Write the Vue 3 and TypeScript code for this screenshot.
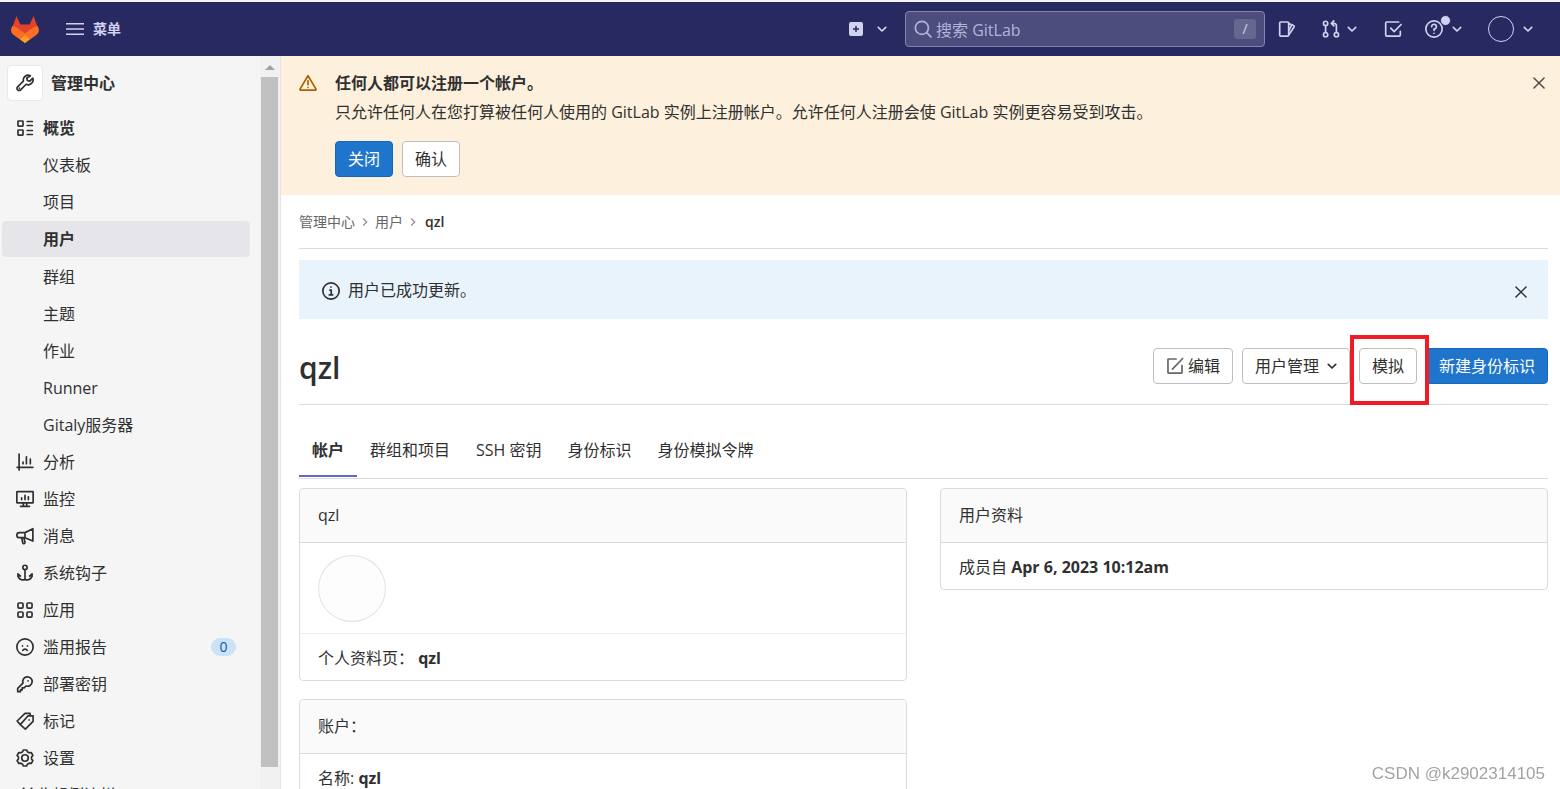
<script setup lang="ts">
import { ref } from 'vue'

interface NavItem {
  label: string
  icon: string
  badge?: number
}

const subItems: string[] = ['仪表板', '项目', '用户', '群组', '主题', '作业', 'Runner', 'Gitaly服务器']
const activeSub = ref('用户')

const navItems: NavItem[] = [
  { label: '分析', icon: 'chart' },
  { label: '监控', icon: 'monitor' },
  { label: '消息', icon: 'megaphone' },
  { label: '系统钩子', icon: 'anchor' },
  { label: '应用', icon: 'apps' },
  { label: '滥用报告', icon: 'frown', badge: 0 },
  { label: '部署密钥', icon: 'key' },
  { label: '标记', icon: 'labels' },
  { label: '设置', icon: 'gear' },
]

const tabs: string[] = ['帐户', '群组和项目', 'SSH 密钥', '身份标识', '身份模拟令牌']
const activeTab = ref('帐户')
const query = ref('')
</script>

<template>
  <svg class="sprite" aria-hidden="true">
    <symbol id="chevron-down" viewBox="0 0 16 16"><path d="M4.7 6.5 8 9.8l3.3-3.3" /></symbol>
    <symbol id="chevron-right" viewBox="0 0 16 16"><path d="M6 4 10 8 6 12" /></symbol>
    <symbol id="collapse" viewBox="0 0 16 16"><path d="M7 2 1.5 8 7 14M14 2 8.500 8l5.500 6" /></symbol>
    <symbol id="close" viewBox="0 0 16 16"><path d="m3.500 3.500 9 9m0-9-9 9" /></symbol>
    <symbol id="search" viewBox="0 0 16 16"><circle cx="7" cy="7" r="5.800" /><path d="m11.500 11.500 3.500 3.500" /></symbol>
    <symbol id="wrench" viewBox="0 0 16 16"><path d="M12.800 1.600A4.300 4.300 0 0 0 6.600 6.400L1.400 11.400a1.900 1.900 0 0 0 0 2.700 1.900 1.900 0 0 0 2.700 0l4.900-5a4.300 4.300 0 0 0 5.900-5.400l-2.600 2.600-2.200-.5-.5-2.200z" /><path d="M3 12.600h.01" /></symbol>
    <symbol id="overview" viewBox="0 0 16 16"><rect x="1.750" y="1.750" width="4.500" height="4.500" rx=".5" /><rect x="1.750" y="9.750" width="4.500" height="4.500" rx=".5" /><path d="M10 2.200h4.500M10 5.800h4.500M10 10.200h4.500M10 13.800h4.500" /></symbol>
    <symbol id="chart" viewBox="0 0 16 16"><path d="M2.750 1v14M1 12.750h14M6.250 8v1.500M9.250 3.500v6M12.750 5.500v4" /></symbol>
    <symbol id="monitor" viewBox="0 0 16 16"><rect x=".75" y="1.500" width="14.500" height="10" rx=".5" /><path d="M6.500 11.500v3m3-3v3M4 14.500h8M5 7v1.500M8 4.800v3.700M11 6v2.500" /></symbol>
    <symbol id="megaphone" viewBox="0 0 16 16"><path d="M15 1.500v11L8 9.500H3A2.250 2.250 0 0 1 3 5h5zM8 5v4.500M5 9.800l1 4.200a1 1 0 0 0 2-.5L7 9.800" /></symbol>
    <symbol id="anchor" viewBox="0 0 16 16"><circle cx="8" cy="3" r="1.900" /><path d="M8 5v9M1.700 11V8.700L4 10.700M1.700 9c0 5.500 5 5.500 6.300 4.800 1.300.7 6.300.7 6.300-4.800M14.300 11V8.700L12 10.700" /></symbol>
    <symbol id="apps" viewBox="0 0 16 16"><rect x="1.750" y="1.750" width="4.500" height="4.500" rx="1" /><rect x="9.750" y="1.750" width="4.500" height="4.500" rx="1" /><rect x="1.750" y="9.750" width="4.500" height="4.500" rx="1" /><rect x="9.750" y="9.750" width="4.500" height="4.500" rx="1" /></symbol>
    <symbol id="frown" viewBox="0 0 16 16"><circle cx="8" cy="8" r="7.250" /><path d="M5.800 7h.01M10.200 7h.01M6 11c.8-1.500 3.200-1.500 4 0" /></symbol>
    <symbol id="key" viewBox="0 0 16 16"><path d="M6.200 7.200a4.200 4.200 0 1 1 2.700 2.600L7.200 11.500H5.500v1.700H4v1.600H1.500v-2.900z" /><path d="M10.700 5.200h.01" /></symbol>
    <symbol id="labels" viewBox="0 0 16 16"><path d="m3.800 11.200 4.500 4 6.900-6.900V3.500h-4.600L3.800 11.200 1 8l7-6.700h4.500v2" /><path d="M11.700 7h.01" /></symbol>
    <symbol id="gear" viewBox="0 0 16 16"><circle cx="8" cy="8" r="2.900" /><path d="M6.500 .9h3l.6 1.600 1.600.9 1.800-.3 1.500 2.600-1.200 1.400v1.800l1.200 1.400-1.500 2.600-1.800-.3-1.600.9-.6 1.600h-3l-.6-1.600-1.600-.9-1.800.3L1 10.300l1.200-1.400V7.100L1 5.700l1.500-2.600 1.800.3 1.600-.9z" /></symbol>
    <symbol id="issues" viewBox="0 0 16 16"><rect x="1.500" y="1.750" width="8" height="12.500" rx="1" /><path d="M9.500 3.200l4.300 1.700a1 1 0 0 1 .5 1.300L9.800 12.800M9.800 9l2.400-4.500" /></symbol>
    <symbol id="merge" viewBox="0 0 16 16"><circle cx="3.200" cy="3" r="1.900" /><circle cx="3.200" cy="13" r="1.900" /><circle cx="12.800" cy="13" r="1.900" /><path d="M3.200 5v6M12.800 11V5.500A2.200 2.200 0 0 0 10.500 3H8.500M10.500.8 8.300 3l2.200 2.200" /></symbol>
    <symbol id="todo" viewBox="0 0 16 16"><path d="M13 1.750H2.500a1 1 0 0 0-1 1v10.500a1 1 0 0 0 1 1h11a1 1 0 0 0 1-1V10M6 7.300l3 3L15.200 4" /></symbol>
    <symbol id="help" viewBox="0 0 16 16"><circle cx="8" cy="8" r="7.250" /><path d="M5.900 6A2.100 2.100 0 1 1 8 8v1.200M8 11.800h.01" /></symbol>
    <symbol id="warning" viewBox="0 0 16 16"><path d="M8 1.600 1 13.200a.8.8 0 0 0 .7 1.200h12.600a.8.8 0 0 0 .7-1.200zM8 6v3.500M8 12h.01" /></symbol>
    <symbol id="info" viewBox="0 0 16 16"><circle cx="8" cy="8" r="7.250" /><path d="M7 7.200h1.200v4M6.500 11.500h3M8 4.500h.01" /></symbol>
    <symbol id="edit" viewBox="0 0 16 16"><path d="M9 1.750H2.250a.5.500 0 0 0-.5.500v11.500a.5.500 0 0 0 .5.500h11.500a.5.500 0 0 0 .5-.5V7.500M7 9.500 14.800 1.300M5.800 10.800 7 9.500" /></symbol>
  </svg>

  <div class="app">
    <header class="navbar">
      <a class="logo" href="#" aria-label="GitLab">
        <svg viewBox="0 0 28 27" aria-hidden="true">
          <path fill="#e24329" d="M5.500 0 1 12l13 15 13-15L22.500 0l-3.800 8.500H9.300z" />
          <path fill="#fc6d26" d="M1.300 10 0 13.500c0 3 1.300 4.500 3 5.700L14 27l11-7.800c1.700-1.200 3-2.700 3-5.700L26.700 10c-3 .5-5 1.700-7 3.200L14 17.500l-5.700-4.300C6.300 11.700 4.300 10.500 1.300 10z" />
          <path fill="#fca326" d="m14 19.200-4.800 4L14 27l4.800-3.800z" />
        </svg>
      </a>
      <button class="menu-btn" type="button">
        <svg class="burger" viewBox="0 0 18 12" aria-hidden="true"><path d="M0 .75h18M0 6h18M0 11.250h18" /></svg>
        菜单
      </button>
      <nav class="nav-right" aria-label="工具栏">
        <button class="nav-btn new" type="button" aria-label="新建">
          <svg class="plus" viewBox="0 0 14 14" aria-hidden="true"><rect width="14" height="14" rx="2" fill="#d1d1f0" /><path d="M7 4v6M4 7h6" stroke="#292961" stroke-width="1.500" /></svg>
          <svg class="icon"><use href="#chevron-down" /></svg>
        </button>
        <label class="search">
          <svg class="icon"><use href="#search" /></svg>
          <input v-model="query" type="text" placeholder="搜索 GitLab" aria-label="搜索 GitLab" />
          <kbd>/</kbd>
        </label>
        <a class="nav-btn issues" href="#" aria-label="议题"><svg class="icon"><use href="#issues" /></svg></a>
        <button class="nav-btn merge" type="button" aria-label="合并请求">
          <svg class="icon"><use href="#merge" /></svg><svg class="icon"><use href="#chevron-down" /></svg>
        </button>
        <a class="nav-btn todo" href="#" aria-label="待办事项"><svg class="icon"><use href="#todo" /></svg></a>
        <button class="nav-btn help" type="button" aria-label="帮助">
          <svg class="icon"><use href="#help" /></svg><span class="dot"></span><svg class="icon"><use href="#chevron-down" /></svg>
        </button>
        <button class="nav-btn user" type="button" aria-label="用户菜单">
          <span class="avatar-sm"></span><svg class="icon"><use href="#chevron-down" /></svg>
        </button>
      </nav>
    </header>

    <div class="body">
      <aside class="sidebar">
        <nav class="side-nav" aria-label="管理中心">
          <a class="context" href="#">
            <span class="context-icon"><svg class="icon"><use href="#wrench" /></svg></span>
            管理中心
          </a>
          <ul>
            <li>
              <a class="row strong" href="#"><svg class="icon"><use href="#overview" /></svg>概览</a>
              <ul class="sub">
                <li v-for="s in subItems" :key="s">
                  <a class="row child" :class="{ active: s === activeSub }" href="#" @click.prevent="activeSub = s">{{ s }}</a>
                </li>
              </ul>
            </li>
            <li v-for="n in navItems" :key="n.label">
              <a class="row" href="#">
                <svg class="icon"><use :href="'#' + n.icon" /></svg>{{ n.label }}
                <span v-if="n.badge !== undefined" class="badge">{{ n.badge }}</span>
              </a>
            </li>
          </ul>
          <button class="collapse" type="button"><svg class="icon"><use href="#collapse" /></svg>收起侧边栏</button>
        </nav>
        <div class="scrollbar" aria-hidden="true"><span class="arrow"></span><span class="thumb"></span></div>
      </aside>

      <main class="main">
        <section class="banner">
          <svg class="icon warn"><use href="#warning" /></svg>
          <div class="banner-body">
            <h2>任何人都可以注册一个帐户。</h2>
            <p>只允许任何人在您打算被任何人使用的 GitLab 实例上注册帐户。允许任何人注册会使 GitLab 实例更容易受到攻击。</p>
            <div class="actions">
              <button class="btn primary" type="button">关闭</button>
              <button class="btn" type="button">确认</button>
            </div>
          </div>
          <button class="close" type="button" aria-label="关闭提示"><svg class="icon"><use href="#close" /></svg></button>
        </section>

        <div class="content">
          <nav class="crumbs" aria-label="面包屑">
            <a href="#">管理中心</a>
            <svg class="sep"><use href="#chevron-right" /></svg>
            <a href="#">用户</a>
            <svg class="sep"><use href="#chevron-right" /></svg>
            <a class="current" href="#">qzl</a>
          </nav>

          <div class="alert" role="status">
            <svg class="icon"><use href="#info" /></svg>
            <span>用户已成功更新。</span>
            <button class="close" type="button" aria-label="关闭消息"><svg class="icon"><use href="#close" /></svg></button>
          </div>

          <div class="title-row">
            <h1>qzl</h1>
            <div class="actions">
              <a class="btn edit" href="#"><svg class="icon"><use href="#edit" /></svg>编辑</a>
              <button class="btn dropdown" type="button">用户管理<svg class="icon"><use href="#chevron-down" /></svg></button>
              <span class="marked"><a class="btn" href="#">模拟</a></span>
              <a class="btn primary wide" href="#">新建身份标识</a>
            </div>
          </div>

          <div class="tabs" role="tablist">
            <button
              v-for="t in tabs"
              :key="t"
              type="button"
              role="tab"
              :aria-selected="t === activeTab"
              :class="{ active: t === activeTab }"
              @click="activeTab = t"
            >{{ t }}</button>
          </div>

          <div class="columns">
            <div class="column">
              <section class="card">
                <h3>qzl</h3>
                <div class="avatar-row"><span class="avatar"></span></div>
                <p class="line">个人资料页： <a href="#">qzl</a></p>
              </section>
              <section class="card">
                <h3>账户：</h3>
                <p class="line">名称: <b>qzl</b></p>
              </section>
            </div>
            <div class="column">
              <section class="card">
                <h3>用户资料</h3>
                <p class="line">成员自 <b>Apr 6, 2023 10:12am</b></p>
              </section>
            </div>
          </div>
        </div>
      </main>
    </div>
    <div class="watermark">CSDN @k2902314105</div>
  </div>
</template>

<style>
body {
  margin: 0;
}
</style>

<style scoped>
* {
  box-sizing: border-box;
}
.sprite {
  position: absolute;
  width: 0;
  height: 0;
}
.app {
  display: flex;
  flex-direction: column;
  height: 100vh;
  overflow: hidden;
  border-top: 2px solid #f4f4f6;
  background: #fff;
  color: #303030;
  font: 16px/24px "Open Sans", "Noto Sans CJK SC", sans-serif;
}
button,
input {
  font: inherit;
  color: inherit;
}
button {
  border: 0;
  padding: 0;
  background: none;
  cursor: pointer;
}
a {
  color: inherit;
  text-decoration: none;
}
h1,
h2,
h3,
p,
ul {
  margin: 0;
  padding: 0;
  list-style: none;
}
.icon {
  flex: none;
  width: 18px;
  height: 18px;
  fill: none;
  stroke: currentColor;
  stroke-width: 1.5;
  stroke-linecap: round;
  stroke-linejoin: round;
}

/* top bar */
.navbar {
  flex: none;
  display: flex;
  align-items: center;
  height: 54px;
  padding: 0 23px 0 11px;
  background: #292961;
  color: #d1d1f0;
}
.logo {
  width: 28px;
  height: 27px;
}
.logo svg {
  display: block;
  width: 28px;
  height: 27px;
}
.menu-btn {
  display: flex;
  align-items: center;
  gap: 9px;
  margin-left: 27px;
  font-size: 14px;
  font-weight: 700;
}
.burger {
  width: 18px;
  height: 12px;
  stroke: #d1d1f0;
  stroke-width: 1.5;
}
.nav-right {
  display: flex;
  align-items: center;
  margin-left: auto;
}
.nav-btn {
  position: relative;
  display: flex;
  align-items: center;
}
.plus {
  width: 14px;
  height: 14px;
}
.new {
  gap: 10px;
  margin-right: 14px;
}
.search {
  display: flex;
  align-items: center;
  width: 360px;
  height: 36px;
  padding: 0 8px;
  border: 1px solid #8484b0;
  border-radius: 4px;
  background: #4c4c7d;
  color: #b4b4da;
}
.search input {
  flex: 1;
  min-width: 0;
  margin-left: 4px;
  padding: 2px 0 0;
  border: 0;
  outline: 0;
  background: none;
}
.search input::placeholder {
  color: #b4b4da;
  opacity: 1;
}
.search kbd {
  width: 22px;
  border-radius: 3px;
  background: #66668f;
  color: #d1d1f0;
  font: 14px/20px "Open Sans", sans-serif;
  text-align: center;
}
.issues {
  margin-left: 13px;
}
.merge {
  gap: 3px;
  margin-left: 26px;
}
.todo {
  margin-left: 23px;
}
.help {
  gap: 5px;
  margin-left: 23px;
}
.dot {
  position: absolute;
  left: 15px;
  top: -5px;
  width: 11px;
  height: 11px;
  border: 1px solid #292961;
  border-radius: 50%;
  background: #d1d1f0;
}
.user {
  gap: 5px;
  margin-left: 22px;
}
.avatar-sm {
  width: 26px;
  height: 26px;
  border: 1px solid #d1d1f0;
  border-radius: 50%;
}

/* sidebar */
.body {
  flex: 1;
  display: flex;
  min-height: 0;
}
.sidebar {
  flex: none;
  display: flex;
  width: 281px;
  border-right: 1px solid #e5e5e8;
  background: #f5f5f5;
}
.side-nav {
  flex: 1;
  overflow: hidden;
  padding: 9px 10px 0 2px;
}
.context {
  display: flex;
  align-items: center;
  gap: 8px;
  height: 36px;
  margin: 0 0 9px 5px;
  font-weight: 600;
}
.context-icon {
  display: flex;
  align-items: center;
  justify-content: center;
  width: 36px;
  height: 36px;
  border: 1px solid #e8e8e8;
  border-radius: 4px;
  background: #fff;
}
.row {
  display: flex;
  align-items: center;
  gap: 9px;
  height: 36px;
  margin-bottom: 1px;
  padding: 0 14px;
  border-radius: 4px;
}
.child {
  padding-left: 41px;
}
.strong,
.active {
  font-weight: 600;
}
.row.active {
  margin-bottom: 2px;
  background: #e6e6ea;
}
.badge {
  min-width: 25px;
  margin-left: auto;
  border-radius: 9px;
  background: #cbe2f9;
  color: #0b5cad;
  font-size: 14px;
  line-height: 18px;
  text-align: center;
}
.collapse {
  display: flex;
  align-items: center;
  gap: 2px;
  height: 36px;
  padding-left: 14px;
}
.scrollbar {
  flex: none;
  display: flex;
  flex-direction: column;
  align-items: center;
  width: 20px;
  padding: 0 2px 0 1px;
  background: #f1f1f1;
}
.arrow {
  margin: 9px 0 7px;
  border: solid transparent;
  border-width: 0 5px 5px;
  border-bottom-color: #a3a3a3;
}
.thumb {
  flex: 1;
  width: 17px;
  margin-bottom: 22px;
  background: #c1c1c1;
}

/* banner */
.main {
  flex: 1;
  min-width: 0;
  overflow: hidden;
}
.banner {
  display: flex;
  align-items: flex-start;
  padding: 15px 12px 18px 18px;
  background: #fdf1dd;
}
.warn {
  margin-top: 3px;
  color: #ab6100;
}
.banner-body {
  flex: 1;
  margin-left: 18px;
}
.banner h2 {
  margin-bottom: 5px;
  font-size: 16px;
  line-height: 24px;
  font-weight: 600;
}
.banner .actions {
  margin-top: 17px;
}
.close {
  display: flex;
  margin-top: 3px;
}
.close .icon {
  stroke-width: 1.3;
}
.banner .close {
  color: #4f4a42;
}
.actions {
  display: flex;
  gap: 9px;
}
.btn {
  display: inline-flex;
  align-items: center;
  height: 36px;
  padding: 0 12px;
  border: 1px solid #bfbfbf;
  border-radius: 4px;
  background: #fff;
}
.btn.primary {
  border-color: #1068bf;
  background: #1f75cb;
  color: #fff;
}

/* content */
.content {
  padding: 0 12px 0 18px;
}
.crumbs {
  display: flex;
  align-items: center;
  height: 54px;
  border-bottom: 1px solid #dcdcdc;
  color: #666;
  font-size: 14px;
}
.sep {
  width: 14px;
  height: 14px;
  margin: 0 3px;
  fill: none;
  stroke: #888;
  stroke-width: 1.3;
}
.current {
  margin-left: 2px;
  color: #303030;
  font-weight: 600;
}
.alert {
  display: flex;
  align-items: center;
  gap: 8px;
  height: 59px;
  margin-top: 11px;
  padding: 0 18px 0 23px;
  background: #e9f3fc;
}
.alert > .icon {
  margin-top: 3px;
}
.alert .close {
  margin: 4px 0 0 auto;
}
.title-row {
  display: flex;
  align-items: center;
  justify-content: space-between;
  padding: 29px 0 20px;
  border-bottom: 1px solid #dcdcdc;
}
h1 {
  padding-top: 4px;
  font-size: 30px;
  line-height: 32px;
  font-weight: 600;
}
.btn.edit {
  gap: 4px;
}
.btn.edit .icon {
  color: #666;
}
.btn.dropdown {
  gap: 4px;
  padding-right: 8px;
}
.marked {
  position: relative;
}
.marked::after {
  content: "";
  position: absolute;
  inset: -13px -12px -21px -9px;
  border: 4px solid #ee1c25;
  pointer-events: none;
}
.marked {
  z-index: 1;
}
.tabs {
  display: flex;
  margin-top: 18px;
  padding-bottom: 1px;
  border-bottom: 1px solid #dcdcdc;
}
.tabs button {
  height: 54px;
  padding: 0 13px;
}
.tabs .active {
  box-shadow: inset 0 -2px #6666c4;
}
.columns {
  display: grid;
  grid-template-columns: 1fr 1fr;
  gap: 33px;
  margin-top: 9px;
}
.card {
  margin-bottom: 18px;
  border: 1px solid #dcdcdc;
  border-radius: 4px;
}
.card h3 {
  padding: 14px 18px 15px;
  border-bottom: 1px solid #dcdcdc;
  border-radius: 4px 4px 0 0;
  background: #fafafa;
  font-size: 16px;
  line-height: 24px;
  font-weight: 400;
}
.avatar-row {
  padding: 12px 18px 11px;
  border-bottom: 1px solid #eee;
}
.avatar {
  display: block;
  width: 68px;
  height: 67px;
  border: 1px solid #e2e2e2;
  border-radius: 50%;
  background: #fdfdfd;
}
.line {
  padding: 12px 18px 10px;
}
.line a,
.line b {
  font-weight: 700;
}
.watermark {
  position: fixed;
  right: 15px;
  bottom: 5px;
  color: #a3a3a3;
  font: 17px/20px "Liberation Sans", Arial, sans-serif;
  text-shadow: 1px 1px #fff;
}
</style>
